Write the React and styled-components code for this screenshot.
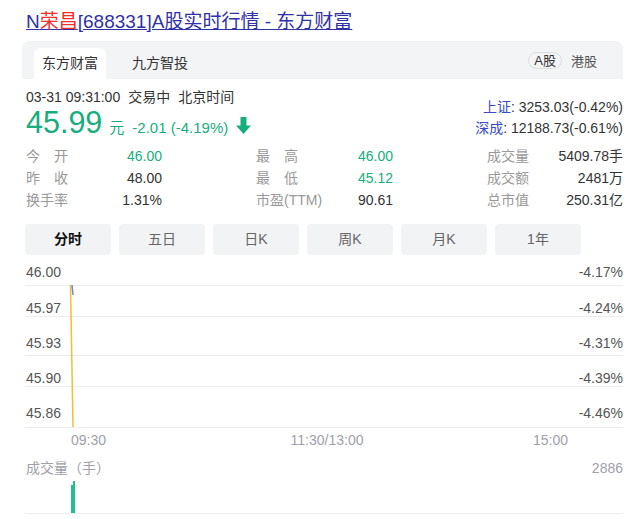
import React from 'react'
import styled, { createGlobalStyle } from 'styled-components'

const GlobalStyle = createGlobalStyle`
  body {
    margin: 0;
    background: #fff;
    font-family: "Liberation Sans", "Noto Sans CJK SC", sans-serif;
  }
`

const GREEN = '#17ad7e'

const Page = styled.div`
  width: 640px;
  box-sizing: border-box;
  padding: 10px 17px 0 22px;
`

const Title = styled.a`
  display: block;
  padding-left: 4px;
  font-size: 19px;
  line-height: 24px;
  color: #2f31a8;
  text-decoration: underline;
`

const Red = styled.span`
  color: #f0302a;
`

const TabBar = styled.div`
  margin-top: 7px;
  height: 38px;
  background: #f3f4f6;
  border-radius: 8px 8px 0 0;
  display: flex;
  align-items: flex-end;
  padding: 0 26px 0 12px;
`

const Tab = styled.div`
  height: 31px;
  line-height: 31px;
  padding: 0 8px;
  margin-right: 18px;
  font-size: 14px;
  color: #333;
  background: ${p => (p.$active ? '#fff' : 'transparent')};
  border-radius: 6px 6px 0 0;
`

const Market = styled.div`
  margin-left: auto;
  align-self: center;
  display: flex;
  align-items: center;
  gap: 9px;
  font-size: 13px;
  color: #555;
`

const Pill = styled.span`
  border: 1px solid #dcdcdc;
  border-radius: 9px;
  padding: 0 5px;
  line-height: 15px;
  color: #333;
`

const Header = styled.div`
  display: flex;
  justify-content: space-between;
  padding-left: 4px;
  margin-top: 9px;
`

const TimeRow = styled.div`
  display: flex;
  gap: 8px;
  font-size: 14px;
  line-height: 18px;
  color: #333;
`

const PriceRow = styled.div`
  display: flex;
  align-items: baseline;
  color: ${GREEN};
  height: 32px;
`

const Price = styled.span`
  font-size: 30.5px;
  line-height: 32px;
`

const Unit = styled.span`
  font-size: 15px;
  margin-left: 7px;
`

const Change = styled.span`
  font-size: 15px;
  margin-left: 8px;
`

const Arrow = styled.svg`
  margin-left: 8px;
  align-self: center;
  margin-top: 6px;
`

const Indices = styled.div`
  margin-top: 9px;
  text-align: right;
  font-size: 14px;
  line-height: 21px;
  color: #333;
`

const IndexName = styled.span`
  color: #3949c8;
`

const Stats = styled.div`
  display: grid;
  grid-template-columns: 136px 137px 136px;
  column-gap: 94px;
  padding-left: 4px;
  margin-top: 6px;
`

const Stat = styled.div`
  display: flex;
  justify-content: space-between;
  font-size: 14px;
  line-height: 22px;
`

const Label = styled.span`
  color: #999;
  min-width: 42px;
  text-align: justify;
  text-align-last: justify;
`

const Value = styled.span`
  color: ${p => (p.$green ? GREEN : '#333')};
`

const Periods = styled.div`
  display: flex;
  gap: 8px;
  padding-left: 3px;
  margin-top: 13px;
`

const Period = styled.div`
  width: 86px;
  height: 31px;
  line-height: 31px;
  text-align: center;
  border-radius: 4px;
  background: #f2f3f5;
  font-size: 14px;
  color: ${p => (p.$active ? '#111' : '#666')};
  font-weight: ${p => (p.$active ? 700 : 400)};
`

const Chart = styled.svg`
  display: block;
  font-family: "Liberation Sans", "Noto Sans CJK SC", sans-serif;
`

const stats = [
  ['今开', '46.00', true, '最高', '46.00', true, '成交量', '5409.78手'],
  ['昨收', '48.00', false, '最低', '45.12', true, '成交额', '2481万'],
  ['换手率', '1.31%', false, '市盈(TTM)', '90.61', false, '总市值', '250.31亿'],
]

const periods = ['分时', '五日', '日K', '周K', '月K', '1年']

// chart coords: x = pageX - 22, y = pageY - 254
const yLabels = [
  ['46.00', '-4.17%', 22],
  ['45.97', '-4.24%', 58],
  ['45.93', '-4.31%', 93],
  ['45.90', '-4.39%', 128],
  ['45.86', '-4.46%', 163],
]
const gridLines = [30, 61, 100, 131, 172]

const App = () => (
  <>
    <GlobalStyle />
    <Page>
      <Title href="#">N<Red>荣昌</Red>[688331]A股实时行情 - 东方财富</Title>
      <TabBar>
        <Tab $active>东方财富</Tab>
        <Tab>九方智投</Tab>
        <Market>
          <Pill>A股</Pill>
          <span>港股</span>
        </Market>
      </TabBar>
      <Header>
        <div>
          <TimeRow>
            <span>03-31 09:31:00</span>
            <span>交易中</span>
            <span>北京时间</span>
          </TimeRow>
          <PriceRow>
            <Price>45.99</Price>
            <Unit>元</Unit>
            <Change>-2.01 (-4.19%)</Change>
            <Arrow width="15" height="17" viewBox="0 0 15 17">
              <path d="M4.5 0h6v8.5h4.5L7.5 17 0 8.5h4.5z" fill={GREEN} />
            </Arrow>
          </PriceRow>
        </div>
        <Indices>
          <div><IndexName>上证</IndexName>: 3253.03(-0.42%)</div>
          <div><IndexName>深成</IndexName>: 12188.73(-0.61%)</div>
        </Indices>
      </Header>
      <Stats>
        {stats.map(r => (
          <React.Fragment key={r[0]}>
            <Stat><Label>{r[0]}</Label><Value $green={r[2]}>{r[1]}</Value></Stat>
            <Stat><Label>{r[3]}</Label><Value $green={r[5]}>{r[4]}</Value></Stat>
            <Stat><Label>{r[6]}</Label><Value>{r[7]}</Value></Stat>
          </React.Fragment>
        ))}
      </Stats>
      <Periods>
        {periods.map((p, i) => (
          <Period key={p} $active={i === 0}>{p}</Period>
        ))}
      </Periods>
      <Chart width="601" height="265" viewBox="0 0 601 265">
        {gridLines.map(y => (
          <line key={y} x1="3" x2="601" y1={y + 0.5} y2={y + 0.5} stroke="#ededed" />
        ))}
        {yLabels.map(([l, r, y]) => (
          <g key={l} fontSize="14" fill="#555">
            <text x="4" y={y}>{l}</text>
            <text x="601" y={y} textAnchor="end">{r}</text>
          </g>
        ))}
        <line x1="48.5" y1="30" x2="51" y2="172" stroke="#f5bd2f" strokeWidth="1.5" />
        <line x1="50" y1="30" x2="51" y2="40" stroke="#6b86e6" strokeWidth="1.5" />
        <g fontSize="14" fill="#a0a0a8">
          <text x="49" y="190">09:30</text>
          <text x="305" y="190" textAnchor="middle">11:30/13:00</text>
          <text x="546" y="190" textAnchor="end">15:00</text>
        </g>
        <text x="4" y="218" fontSize="14" fill="#a0a0a8">成交量（手）</text>
        <text x="601" y="218" fontSize="14" fill="#a0a0a8" textAnchor="end">2886</text>
        <rect x="49" y="230" width="2" height="28" fill="#1dc08e" />
        <rect x="51" y="226" width="2" height="32" fill="#1dc08e" />
        <line x1="3" x2="601" y1="258.5" y2="258.5" stroke="#ededed" />
      </Chart>
    </Page>
  </>
)

export default App
